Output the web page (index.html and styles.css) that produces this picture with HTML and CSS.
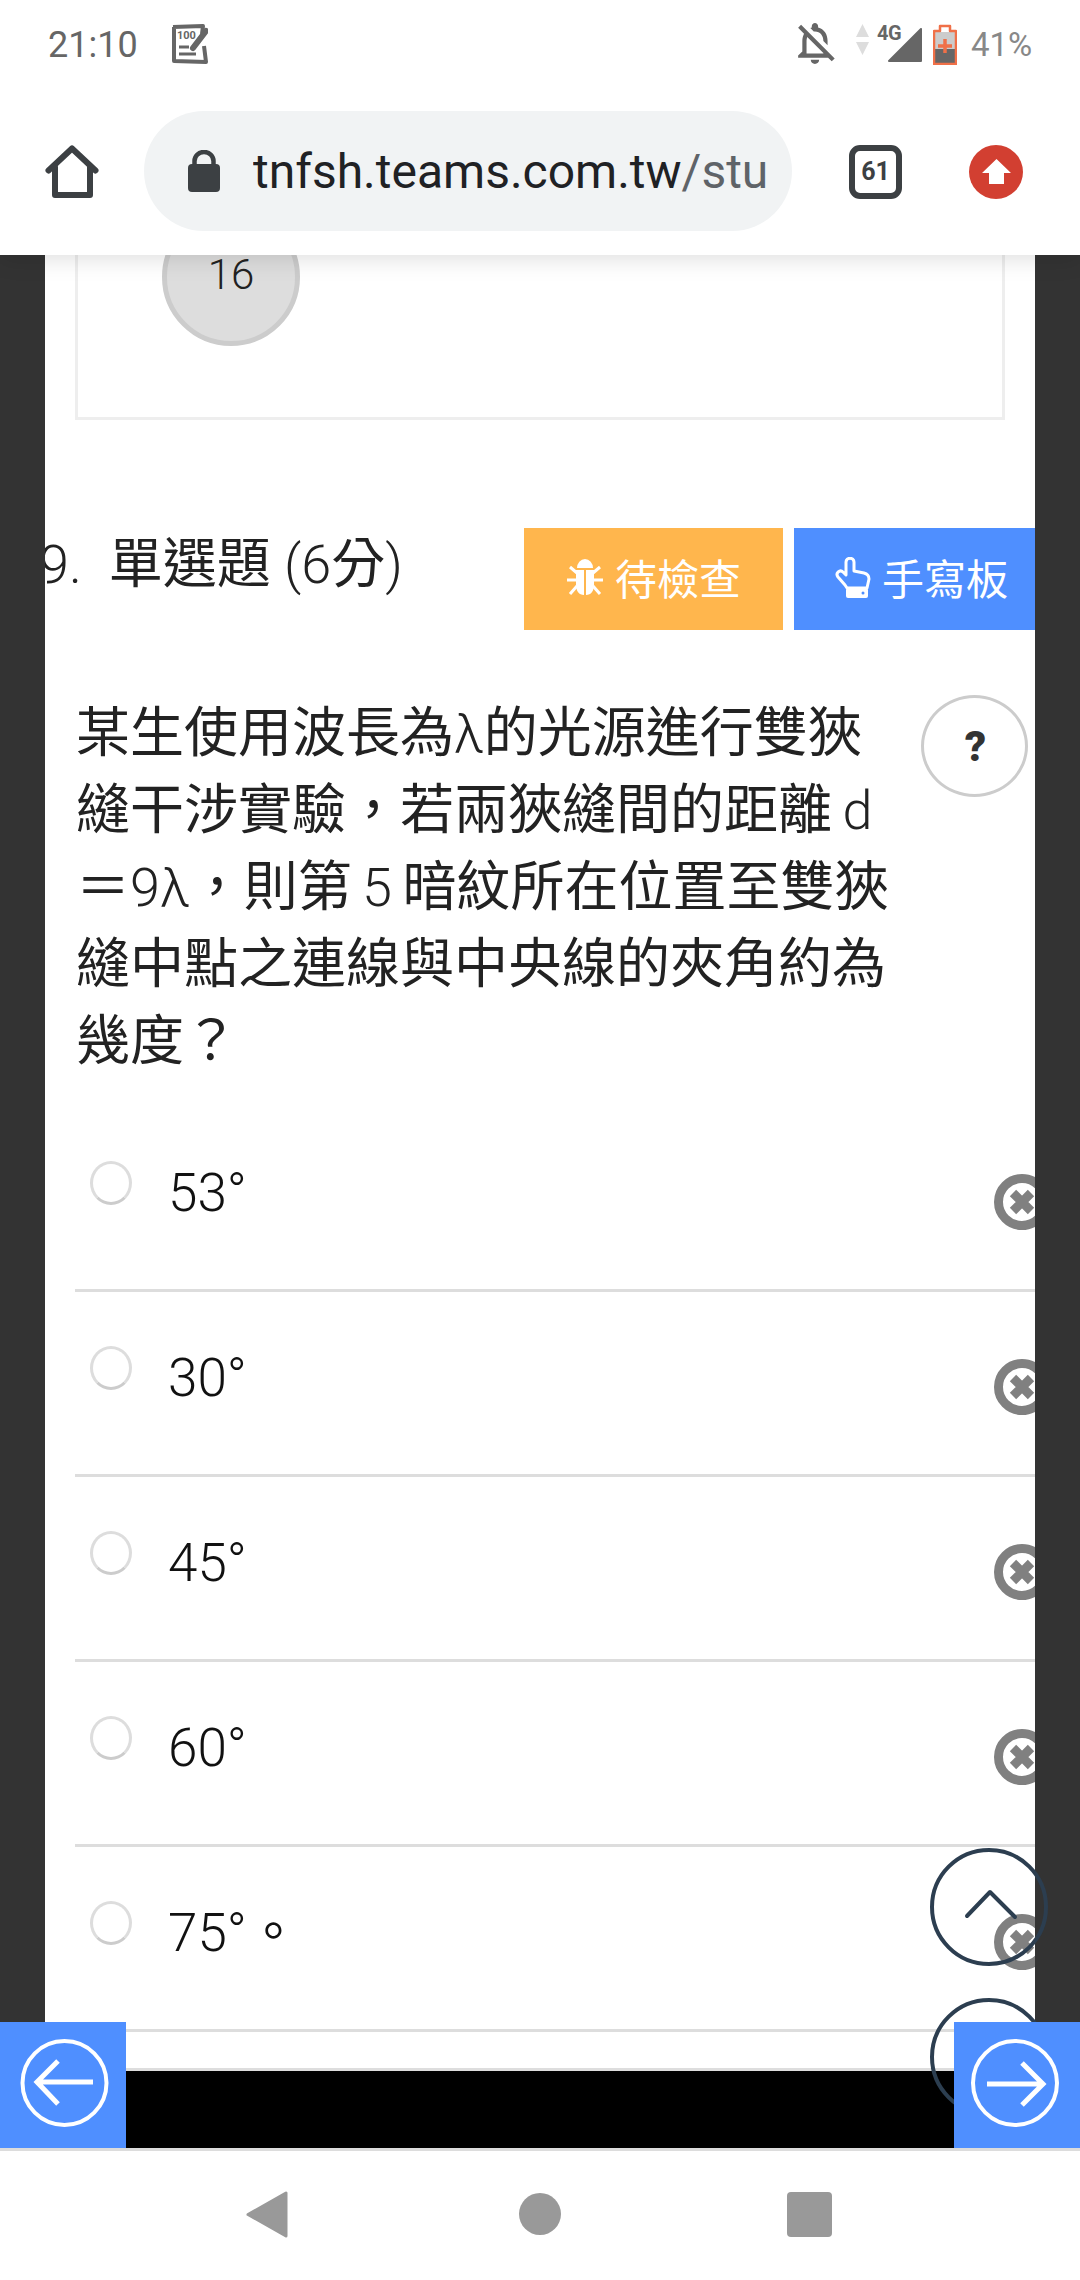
FILE: index.html
```html
<!DOCTYPE html>
<html lang="zh-Hant">
<head>
<meta charset="utf-8">
<title>單選題</title>
<link rel="stylesheet" href="styles.css">
</head>
<body>
<div class="phone">
  <header class="top">
    <div class="status">
      <span class="time">21:10</span>
      <svg class="note" viewBox="0 0 38 40"><path d="M3 3 L33 2 L32 10 M4 3 L4 37 L36 38 L34 22" fill="none" stroke="#666" stroke-width="4" stroke-linejoin="round"/><text x="7" y="15" class="note-num">100</text><path d="M23 24 L36 7" stroke="#666" stroke-width="6" stroke-linecap="round"/><path d="M9 23 H19 M9 30 H26" stroke="#666" stroke-width="3"/></svg>
      <span class="grow"></span>
      <svg class="bell" viewBox="3.5 2.5 18 19.5"><path fill="#666" d="M12 22c1.1 0 2-.9 2-2h-4c0 1.1.9 2 2 2zm0-15.500c2.490 0 4 2.020 4 4.500v.1l2 2V11c0-3.070-1.630-5.640-4.500-6.320V4c0-.83-.67-1.500-1.500-1.500s-1.500.67-1.500 1.500v.68c-.24.06-.47.15-.69.23l1.640 1.640c.18-.02.36-.05.55-.05zM5.410 3.350L4 4.760l2.810 2.810C6.290 8.570 6 9.740 6 11v5l-2 2v1h14.240l1.740 1.740 1.410-1.410L5.410 3.350zM16 17H8v-6c0-.68.12-1.320.34-1.900L16 16.760V17z"/></svg>
      <svg class="updown" viewBox="0 0 13 31"><path fill="#ddd" d="M6.500 0 L13 13 H0 Z M0 18 H13 L6.500 31 Z"/></svg>
      <span class="signal"><span class="net">4G</span><svg class="bars" viewBox="0 0 34 34"><path fill="#666" stroke="#666" stroke-width="2" stroke-linejoin="round" d="M1 33 L33 1 V33 Z"/></svg></span>
      <svg class="battery" viewBox="0 0 24 41"><path fill="#ccc" d="M2 8 H22 V25 H2 Z"/><path fill="#666" d="M2 25 H22 V39 H2 Z"/><path fill="none" stroke="#f07048" stroke-width="2.500" stroke-linejoin="round" d="M7 7 V2 H17 V7 H23 V40 H1 V7 Z"/><path stroke="#f07048" stroke-width="3.500" d="M12 15 V29 M5 22 H19"/></svg>
      <span class="pct">41%</span>
    </div>
    <div class="toolbar">
      <svg class="home" viewBox="0 0 54 54"><path d="M3.500 25.500 L27 3.500 L50.500 25.500 M10 22 V50 H45 V22" fill="none" stroke="#3c4043" stroke-width="6" stroke-linecap="round" stroke-linejoin="round"/></svg>
      <div class="pill">
        <svg class="lock" viewBox="0 0 32 42"><rect x="0" y="14" width="32" height="28" rx="4" fill="#3c4043"/><path d="M6.500 16 V11 a9.500 9 0 0 1 19 0 V16" fill="none" stroke="#3c4043" stroke-width="4.500"/></svg>
        <span class="url">tnfsh.teams.com.tw<span class="url-path">/stu</span></span>
      </div>
      <div class="tabs">61</div>
      <svg class="update" viewBox="0 0 54 54"><circle cx="27" cy="27" r="27" fill="#d23f31"/><path fill="#fff" d="M27.500 14 L42 28 H35 V39 H20 V28 H13 Z"/></svg>
    </div>
  </header>

  <main class="page">
    <div class="sheet">
      <section class="card">
        <div class="num-circle">16</div>
      </section>

      <section class="head">
        <div class="title"><span class="lat">9.</span>&nbsp;&nbsp;單選題 <span class="lat">(6</span>分<span class="lat">)</span></div>
        <div class="actions">
          <div class="btn btn-orange">
            <svg class="bug" viewBox="0 0 36 38"><g fill="#fff"><path d="M10 10 a8 9 0 0 1 16 0 z"/><path d="M9 12 h8 v25 c-5 0-8-4-8-10 z"/><path d="M27 12 h-8 v25 c5 0 8-4 8-10 z"/></g><path d="M10 15 L3 9 M10 22 H0 M10 28 L3 36 M26 15 L33 9 M26 22 H36 M26 28 L33 36" stroke="#fff" stroke-width="3"/></svg>
            <span class="btn-label">待檢查</span>
          </div>
          <div class="btn btn-blue">
            <svg class="hand" viewBox="0 0 36 41"><path d="M10 28 L3 20 c-3-4 2-8 5-5 l3 3 V5 c0-5 8-5 8 0 v9 l10 2 c4 1 5 3 5 6 l-2 9 H12 z" fill="none" stroke="#fff" stroke-width="3" stroke-linejoin="round"/><rect x="11" y="31" width="22" height="10" rx="2" fill="#fff"/><circle cx="28" cy="36" r="1.500" fill="#4f8fff"/></svg>
            <span class="btn-label">手寫板</span>
          </div>
        </div>
      </section>

      <section class="question">
        <p class="q-text">某生使用波長為<span class="lat">λ</span>的光源進行雙狹<br>縫干涉實驗，若兩狹縫間的距離 <span class="lat">d</span><br>＝<span class="lat">9λ</span>，則第 <span class="lat">5</span> 暗紋所在位置至雙狹<br>縫中點之連線與中央線的夾角約為<br>幾度？</p>
        <div class="help">?</div>
      </section>

      <ul class="options">
        <li class="opt"><span class="radio"></span><span class="opt-text">53°</span><svg class="del" viewBox="0 0 56 56"><use href="#del"/></svg></li>
        <li class="opt"><span class="radio"></span><span class="opt-text">30°</span><svg class="del" viewBox="0 0 56 56"><use href="#del"/></svg></li>
        <li class="opt"><span class="radio"></span><span class="opt-text">45°</span><svg class="del" viewBox="0 0 56 56"><use href="#del"/></svg></li>
        <li class="opt"><span class="radio"></span><span class="opt-text">60°</span><svg class="del" viewBox="0 0 56 56"><use href="#del"/></svg></li>
        <li class="opt"><span class="radio"></span><span class="opt-text">75°<span class="opt-mark">。</span></span><svg class="del" viewBox="0 0 56 56"><use href="#del"/></svg></li>
        <li class="stub"></li>
      </ul>
    </div>
  </main>

  <footer class="bar"></footer>

  <nav class="nav">
    <svg class="nav-back" viewBox="0 0 42 47"><path fill="#999" stroke="#999" stroke-width="3" stroke-linejoin="round" d="M40 2 V45 L2 23.500 Z"/></svg>
    <span class="nav-home"></span>
    <span class="nav-recent"></span>
  </nav>

  <svg class="scroll scroll-up" viewBox="0 0 118 118"><circle cx="59" cy="59" r="57" fill="none" stroke="#2c3e50" stroke-width="4"/><path d="M37 68 L60 44 L85 69" fill="none" stroke="#2c3e50" stroke-width="4" stroke-linecap="round" stroke-linejoin="round"/></svg>
  <svg class="scroll scroll-down" viewBox="0 0 118 118"><circle cx="59" cy="59" r="57" fill="none" stroke="#2c3e50" stroke-width="4"/></svg>

  <div class="page-btn page-prev"><svg viewBox="0 0 126 126"><circle cx="64.500" cy="61" r="42" fill="none" stroke="#fff" stroke-width="4"/><path d="M37 60 H93 M58 39 L37 60 L58 82" fill="none" stroke="#fff" stroke-width="5"/></svg></div>
  <div class="page-btn page-next"><svg viewBox="0 0 126 126"><circle cx="61" cy="61" r="42" fill="none" stroke="#fff" stroke-width="4"/><path d="M33 62 H89 M68 41 L89 62 L68 83" fill="none" stroke="#fff" stroke-width="5"/></svg></div>

  <svg class="defs" width="0" height="0"><defs><g id="del"><circle cx="28" cy="28" r="23.500" fill="#fff" stroke="#808080" stroke-width="9"/><path d="M19 19 L37 37 M37 19 L19 37" stroke="#808080" stroke-width="9"/></g></defs></svg>
</div>
</body>
</html>
```
FILE: styles.css
```css
* { box-sizing: border-box; }
html, body { margin: 0; padding: 0; }
body {
  width: 1080px;
  height: 2280px;
  overflow: hidden;
  font-family: Roboto, "Noto Sans CJK TC", sans-serif;
  color: #111;
}
.phone {
  position: relative;
  width: 1080px;
  height: 2280px;
  display: flex;
  flex-direction: column;
  overflow: hidden;
  background: #fff;
}
.lat { font-weight: 300; }

/* top chrome */
.top {
  position: relative;
  z-index: 4;
  height: 255px;
  flex: none;
  background: #fff;
  box-shadow: 0 4px 22px rgba(0, 0, 0, .13);
}
.status {
  height: 88px;
  padding: 0 49px 0 48px;
  display: flex;
  align-items: center;
}
.grow { flex: 1; }
.time { font-size: 36px; color: #666; margin-top: 1px; }
.note { width: 38px; height: 40px; margin-left: 32px; margin-top: -1px; }
.note-num { font: 700 11px Roboto, sans-serif; fill: #666; }
.bell { width: 38px; height: 41px; margin-top: -1px; }
.updown { width: 13px; height: 31px; margin-left: 21px; margin-top: -9px; }
.signal { position: relative; width: 45px; height: 36px; margin-left: 8px; display: flex; justify-content: flex-end; margin-top: 2px; }
.bars { width: 34px; height: 34px; margin-top: 1px; }
.net { position: absolute; left: 0; top: -6px; font-size: 20px; font-weight: 700; line-height: 24px; color: #666; letter-spacing: -.5px; }
.battery { width: 24px; height: 41px; margin-left: 11px; }
.pct { font-size: 33px; color: #888; margin-left: 14px; width: 60px; margin-top: 1px; white-space: nowrap; }

.toolbar {
  height: 167px;
  padding-left: 45px;
  display: flex;
  align-items: center;
}
.home { width: 54px; height: 54px; flex: none; }
.pill {
  width: 648px;
  height: 120px;
  margin-left: 45px;
  margin-top: -1px;
  padding: 0 23px 0 44px;
  border-radius: 60px;
  background: #f1f3f4;
  display: flex;
  align-items: center;
  overflow: hidden;
  flex: none;
}
.lock { width: 32px; height: 42px; flex: none; }
.url {
  margin-left: 33px;
  font-size: 48px;
  color: #202124;
  white-space: nowrap;
  overflow: hidden;
}
.url-path { color: #5f6368; }
.tabs {
  width: 53px;
  height: 54px;
  margin-left: 57px;
  border: 6px solid #3c4043;
  border-radius: 11px;
  font-size: 25px;
  font-weight: 700;
  color: #3c4043;
  display: flex;
  align-items: center;
  justify-content: center;
  flex: none;
}
.update { width: 54px; height: 54px; margin-left: 67px; flex: none; }

/* page */
.page {
  flex: 1;
  min-height: 0;
  background: #333;
  padding: 0 45px;
  overflow: hidden;
}
.sheet {
  width: 990px;
  height: 100%;
  background: #fff;
  overflow: hidden;
}
.card {
  width: 930px;
  margin: -65px 0 0 30px;
  padding: 15px 0 71px 84px;
  border: 3px solid #eee;
}
.num-circle {
  width: 138px;
  height: 138px;
  border-radius: 50%;
  background: #ddd;
  border: 5px solid #ccc;
  font-size: 42px;
  font-weight: 300;
  color: #222;
  display: flex;
  align-items: flex-start;
  justify-content: center;
  padding-top: 38px;
  line-height: 47px;
}

.head {
  margin-top: 108px;
  display: flex;
  justify-content: space-between;
  align-items: flex-start;
}
.title {
  margin-left: -6px;
  font-size: 54px;
  line-height: 74px;
  white-space: nowrap;
  color: #222;
}
.actions { display: flex; gap: 11px; }
.btn {
  height: 102px;
  display: flex;
  align-items: center;
  color: #fff;
  font-size: 42px;
  white-space: nowrap;
}
.btn-label { padding-bottom: 6px; }
.btn-orange { width: 259px; background: #ffb64d; padding-left: 43px; gap: 12px; }
.btn-blue { width: 241px; background: #4f8fff; padding-left: 41px; gap: 11px; }
.bug { width: 36px; height: 38px; flex: none; margin-bottom: 4px; }
.hand { width: 36px; height: 41px; flex: none; margin-bottom: 4px; }

.question {
  margin-top: 65px;
  display: flex;
  align-items: flex-start;
}
.q-text {
  margin: 0 0 0 31px;
  width: 845px;
  flex: none;
  font-size: 54px;
  line-height: 77px;
  word-spacing: -3px;
  color: #222;
}
.help {
  width: 107px;
  height: 102px;
  margin: 0;
  flex: none;
  border: 3px solid #ccc;
  border-radius: 50%;
  display: flex;
  align-items: center;
  justify-content: center;
  padding-left: 2px;
  font-size: 42px;
  font-weight: 900;
  color: #333;
}

.options {
  list-style: none;
  margin: 27px 0 0 30px;
  padding: 0;
}
.opt {
  height: 185px;
  border-bottom: 3px solid #ddd;
  display: flex;
  align-items: flex-start;
}
.radio {
  width: 42px;
  height: 44px;
  margin: 54px 0 0 15px;
  flex: none;
  border: 3px solid #ddd;
  border-bottom-color: #ccc;
  border-radius: 50%;
}
.opt-text {
  margin: 51px 0 0 36px;
  font-size: 53px;
  font-weight: 300;
  line-height: 70px;
  color: #111;
  white-space: pre;
}
.opt-mark { font-weight: 400; }
.del {
  width: 56px;
  height: 56px;
  margin: 67px -15px 0 auto;
  flex: none;
}
.stub { height: 39px; border-bottom: 3px solid #ddd; }

.bar { height: 77px; flex: none; background: #000; }
.nav {
  position: relative;
  height: 132px;
  flex: none;
  background: #fff;
  border-top: 3px solid #dcdcdc;
  display: flex;
  align-items: center;
  padding-left: 246px;
}
.nav-back { width: 42px; height: 47px; margin-top: -3px; flex: none; }
.nav-home { width: 42px; height: 42px; margin-left: 231px; border-radius: 50%; background: #999; margin-top: -3px; flex: none; }
.nav-recent { width: 45px; height: 45px; margin-left: 226px; border-radius: 4px; background: #999; margin-top: -3px; flex: none; }

/* floating controls */
.scroll { position: absolute; left: 930px; width: 118px; height: 118px; z-index: 2; }
.scroll-up { top: 1848px; }
.scroll-down { top: 1998px; }
.page-btn { position: absolute; top: 2022px; width: 126px; height: 126px; background: #4f8fff; z-index: 3; }
.page-btn svg { display: block; width: 126px; height: 126px; }
.page-prev { left: 0; }
.page-next { right: 0; }
.defs { position: absolute; }
```
